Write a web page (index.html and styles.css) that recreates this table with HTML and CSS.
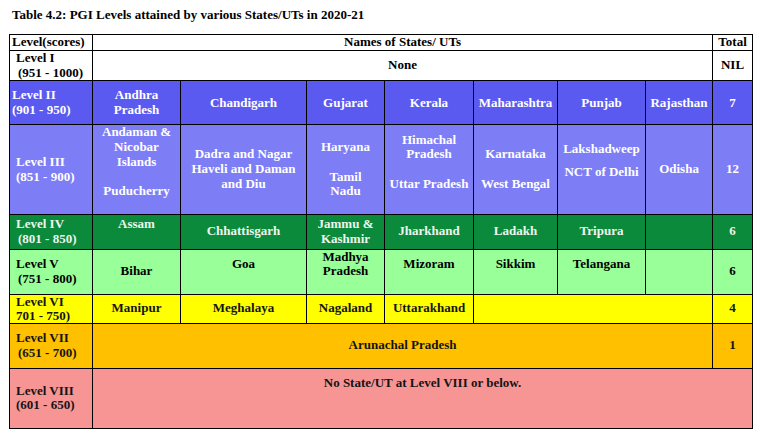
FILE: index.html
```html
<!DOCTYPE html>
<html lang="en">
<head>
<meta charset="utf-8">
<title>PGI Levels</title>
<link rel="stylesheet" href="styles.css">
</head>
<body>
<p class="title">Table 4.2: PGI Levels attained by various States/UTs in 2020-21</p>
<table class="pgi">
  <colgroup>
    <col class="c-level">
    <col class="c1">
    <col class="c2">
    <col class="c3">
    <col class="c4">
    <col class="c5">
    <col class="c6">
    <col class="c7">
    <col class="c-total">
  </colgroup>
  <tr class="r-head">
    <td class="lbl tight">Level(scores)</td>
    <td colspan="7">Names of States/ UTs</td>
    <td>Total</td>
  </tr>
  <tr class="r1">
    <td class="lbl">Level I<br><span class="ind">(951 - 1000)</span></td>
    <td colspan="7">None</td>
    <td>NIL</td>
  </tr>
  <tr class="r2">
    <td class="lbl tight">Level II<br>(901 - 950)</td>
    <td>Andhra<br>Pradesh</td>
    <td>Chandigarh</td>
    <td>Gujarat</td>
    <td>Kerala</td>
    <td>Maharashtra</td>
    <td>Punjab</td>
    <td>Rajasthan</td>
    <td>7</td>
  </tr>
  <tr class="r3">
    <td class="lbl">Level III<br>(851 - 900)</td>
    <td>Andaman &amp;<br>Nicobar<br>Islands<br><br>Puducherry<br>&nbsp;</td>
    <td>Dadra and Nagar<br>Haveli and Daman<br>and Diu</td>
    <td>Haryana<br><br>Tamil<br>Nadu</td>
    <td>Himachal<br>Pradesh<br><br>Uttar Pradesh<br>&nbsp;</td>
    <td>Karnataka<br><br>West Bengal</td>
    <td class="lak"><div>Lakshadweep</div><div class="gap">NCT of Delhi</div></td>
    <td>Odisha</td>
    <td>12</td>
  </tr>
  <tr class="r4">
    <td class="lbl">Level IV<br><span class="ind">(801 - 850)</span></td>
    <td>Assam<br>&nbsp;</td>
    <td>Chhattisgarh</td>
    <td>Jammu &amp;<br>Kashmir</td>
    <td>Jharkhand</td>
    <td>Ladakh</td>
    <td>Tripura</td>
    <td></td>
    <td>6</td>
  </tr>
  <tr class="r5">
    <td class="lbl">Level V<br><span class="ind">(751 - 800)</span></td>
    <td>Bihar</td>
    <td>Goa<br>&nbsp;</td>
    <td>Madhya<br>Pradesh<br>&nbsp;</td>
    <td>Mizoram<br>&nbsp;</td>
    <td>Sikkim<br>&nbsp;</td>
    <td>Telangana<br>&nbsp;</td>
    <td></td>
    <td>6</td>
  </tr>
  <tr class="r6">
    <td class="lbl short">Level VI<br>701 - 750)</td>
    <td>Manipur</td>
    <td>Meghalaya</td>
    <td>Nagaland</td>
    <td>Uttarakhand</td>
    <td colspan="3"></td>
    <td>4</td>
  </tr>
  <tr class="r7">
    <td class="lbl">Level VII<br><span class="ind">(651 - 700)</span></td>
    <td colspan="7">Arunachal Pradesh</td>
    <td>1</td>
  </tr>
  <tr class="r8">
    <td class="lbl">Level VIII<br>(601 - 650)</td>
    <td colspan="8">No State/UT at Level VIII or below.<br>&nbsp;<br>&nbsp;</td>
  </tr>
</table>
</body>
</html>
```

FILE: styles.css
```css
html, body {
  margin: 0;
  background: #ffffff;
}

body {
  padding: 0 0 0 9px;
  font-family: "Liberation Serif", "Times New Roman", serif;
  font-weight: bold;
  font-size: 13px;
  color: #000000;
}

.title {
  margin: 0 0 11px 0;
  padding: 7px 0 0 3px;
  line-height: 16px;
  font-size: 13px;
}

.pgi {
  border-collapse: collapse;
  table-layout: fixed;
  width: 744px;
}

.c-level { width: 83px; }
.c1 { width: 88px; }
.c2 { width: 126px; }
.c3 { width: 78px; }
.c4 { width: 89px; }
.c5 { width: 84px; }
.c6 { width: 88px; }
.c7 { width: 67px; }
.c-total { width: 40px; }

.pgi td {
  border: 1px solid #000000;
  padding: 0 2px;
  text-align: center;
  vertical-align: middle;
  line-height: 14.7px;
  white-space: nowrap;
}

.pgi td.lbl {
  text-align: left;
  padding-left: 6px;
}

.pgi td.tight {
  padding-left: 2px;
}

.pgi td.short {
  line-height: 14px;
}

.ind {
  padding-left: 2px;
}

.pgi td.lak {
  padding-bottom: 18px;
}

.lak .gap {
  margin-top: 8px;
}

.r-head { height: 16px; }
.r1 { height: 30px; }
.r2 { height: 44px; background: #5a5af0; color: #ffffff; }
.r3 { height: 89px; background: #7d7df6; color: #ffffff; }
.r4 { height: 35px; background: #0a8a3a; color: #eef6ee; }
.r5 { height: 45px; background: #99ff99; color: #000000; }
.r6 { height: 29px; background: #ffff00; color: #141414; }
.r7 { height: 45px; background: #ffc000; color: #141414; }
.r8 { height: 60px; background: #f79595; color: #141414; }
```
